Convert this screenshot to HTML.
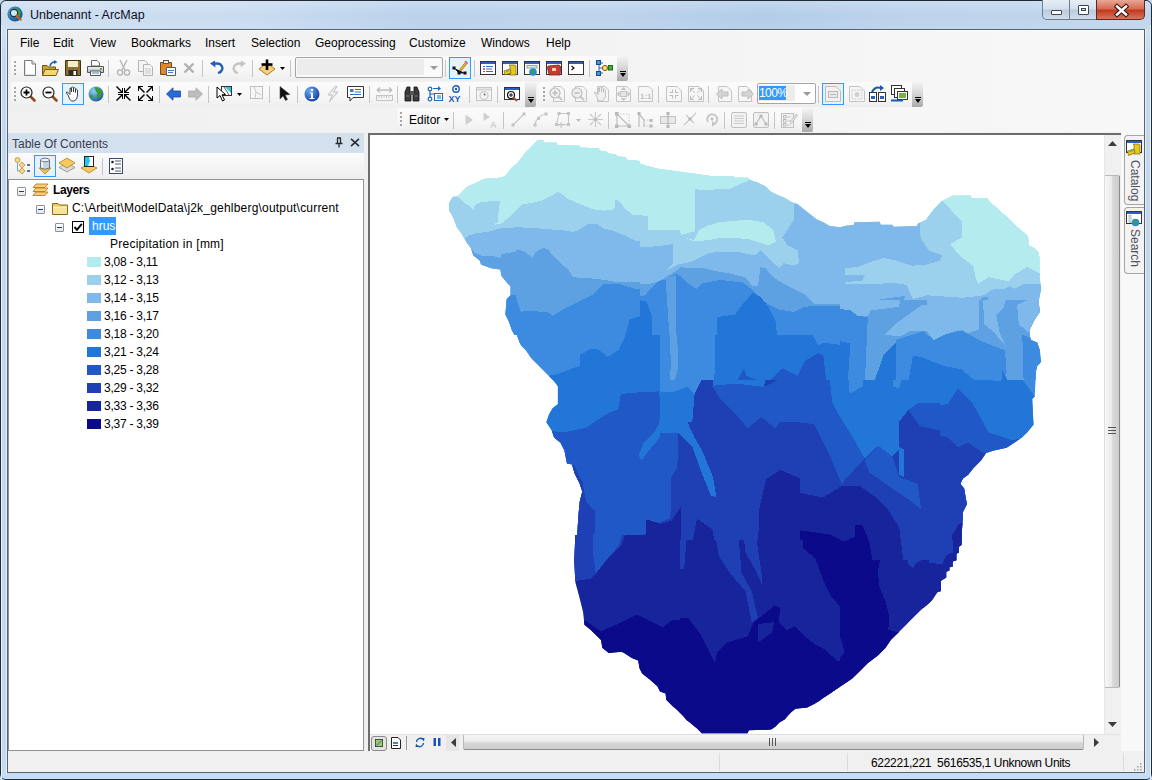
<!DOCTYPE html>
<html><head><meta charset="utf-8">
<style>
*{margin:0;padding:0;box-sizing:border-box}
html,body{width:1152px;height:780px;overflow:hidden;background:#c3d8ee}
body{position:relative;font-family:"Liberation Sans",sans-serif;font-size:12px;color:#000}
.a{position:absolute}
svg.a{overflow:visible}
.menu{top:36px;font-size:12px;color:#000;line-height:14px}
.tb{background:linear-gradient(180deg,#fbfbfb 0%,#f6f6f6 60%,#eeeeee 100%);border-radius:3px 0 0 3px}
.sep{width:1px;background:#c5c5c5;height:17px}
.grip{width:2px;height:14px;background:repeating-linear-gradient(180deg,#a6a6a6 0 2px,transparent 2px 4px)}
.chev{width:11px;background:linear-gradient(180deg,#f4f4f4 0%,#d8d8d8 45%,#a9a9a9 100%);border-radius:0 0 2px 0}
.chev:after{content:"";position:absolute;left:3px;bottom:4px;width:0;height:0;border-left:3px solid transparent;border-right:3px solid transparent;border-top:4px solid #000}
.chev:before{content:"";position:absolute;left:3px;bottom:9px;width:6px;height:1.5px;background:#000}
.hl{border:1px solid #3399ff;background:#e5f1fb}
.leg{left:87px;width:14px;height:10px}
.lt{left:104px;font-size:12px;line-height:14px;letter-spacing:-0.25px}
</style></head><body>
<!-- window frame -->
<div class="a" style="left:0;top:0;width:1152px;height:780px;border:1px solid #1f2a36;border-radius:6px;background:linear-gradient(180deg,#c7dbf0 0px,#d9e7f5 14px,#cfe0f2 29px,#c3d8ee 60px,#c3d8ee 100%)"></div>
<div class="a" style="left:1px;top:1px;width:1150px;height:28px;border-radius:6px 6px 0 0;background:linear-gradient(90deg,#cadcf0 0px,#c6daef 250px,#b6cfea 420px,#b9d1eb 600px,#aecae7 760px,#b8d0ea 900px,#bdd4ec 1150px)"></div>
<div class="a" style="left:1px;top:1px;width:1150px;height:28px;border-radius:6px 6px 0 0;background:linear-gradient(180deg,rgba(255,255,255,0.25) 0px,rgba(255,255,255,0.05) 14px,rgba(255,255,255,0.12) 28px)"></div>
<div class="a" style="left:1px;top:745px;width:1150px;height:34px;border-radius:0 0 5px 5px;background:linear-gradient(180deg,#c3d8ee,#c6ddf5)"></div>
<!-- title icon -->
<svg class="a" style="left:7px;top:6px" width="17" height="17" viewBox="0 0 17 17">
 <defs><radialGradient id="gl" cx="0.35" cy="0.35" r="0.7"><stop offset="0" stop-color="#5fb3e8"/><stop offset="1" stop-color="#0d4f8e"/></radialGradient></defs>
 <circle cx="8" cy="8" r="7.6" fill="url(#gl)"/>
 <path d="M8 1.5 Q12 2.5 14 6 Q12 8 13.5 11 Q11 9 9 10 Q10 6 8 1.5Z" fill="#3f9a3a"/>
 <circle cx="7" cy="7" r="3.6" fill="#c7ecf8" stroke="#2b2b2b" stroke-width="1.1"/>
 <path d="M9.6 9.6 L13.6 13.6" stroke="#b5652a" stroke-width="2.2" stroke-linecap="round"/>
</svg>
<div class="a" style="left:30px;top:8px;font-size:12.5px;color:#10101e;line-height:15px">Unbenannt - ArcMap</div>
<!-- caption buttons -->
<div class="a" style="left:1042px;top:0px;width:28px;height:20px;border:1px solid #6d7d90;border-top:none;border-radius:0 0 0 5px;background:linear-gradient(180deg,#e6eef7 0,#d3dfec 48%,#bccbdc 52%,#cfdceb 100%)"></div>
<div class="a" style="left:1069px;top:0px;width:28px;height:20px;border:1px solid #6d7d90;border-top:none;background:linear-gradient(180deg,#e6eef7 0,#d3dfec 48%,#bccbdc 52%,#cfdceb 100%)"></div>
<div class="a" style="left:1096px;top:0px;width:49px;height:20px;border:1px solid #5a2a26;border-top:none;border-radius:0 0 5px 0;background:linear-gradient(180deg,#e9a795 0,#d66c53 45%,#c23a1e 55%,#d9765d 100%)"></div>
<div class="a" style="left:1051px;top:10px;width:11px;height:5px;background:#fff;border:1px solid #3a4656;border-radius:1px"></div>
<div class="a" style="left:1078px;top:5px;width:11px;height:10px;background:#fff;border:1px solid #3a4656;border-radius:1px"></div>
<div class="a" style="left:1081px;top:8px;width:5px;height:3px;border:1px solid #3a4656;background:#cfdbe8"></div>
<svg class="a" style="left:1115px;top:5px" width="13" height="11" viewBox="0 0 13 11"><path d="M2 1.5 L11 9.5 M11 1.5 L2 9.5" stroke="#3b1a16" stroke-width="4.6" stroke-linecap="square"/><path d="M2 1.5 L11 9.5 M11 1.5 L2 9.5" stroke="#fff" stroke-width="2.4" stroke-linecap="square"/></svg>

<!-- client -->
<div class="a" style="left:1px;top:25px;width:1px;height:754px;background:#eaf3fc"></div><div class="a" style="left:6px;top:29px;width:1px;height:745px;background:#e6f0fb"></div><div class="a" style="left:1150px;top:25px;width:1px;height:754px;background:#eaf3fc"></div><div class="a" style="left:1145px;top:29px;width:1px;height:745px;background:#e6f0fb"></div><div class="a" style="left:7px;top:29px;width:1138px;height:744px;border:1px solid #56626e;background:#f0f0f0"></div>
<div class="a" style="left:8px;top:30px;width:1136px;height:102px;background:linear-gradient(90deg,#f0f0f0 0%,#f3f3f3 50%,#f8f8f8 100%)"></div>
<div class="a" style="left:8px;top:30px;width:1136px;height:1px;background:#fbfbfb"></div>
<!-- menu -->
<div class="a menu" style="left:20px">File</div>
<div class="a menu" style="left:53px">Edit</div>
<div class="a menu" style="left:90px">View</div>
<div class="a menu" style="left:131px">Bookmarks</div>
<div class="a menu" style="left:205px">Insert</div>
<div class="a menu" style="left:251px">Selection</div>
<div class="a menu" style="left:315px">Geoprocessing</div>
<div class="a menu" style="left:409px">Customize</div>
<div class="a menu" style="left:481px">Windows</div>
<div class="a menu" style="left:546px">Help</div>

<!-- toolbars backgrounds -->
<div class="a tb" style="left:11px;top:56px;width:606px;height:25px"></div>
<div class="a chev" style="left:617px;top:56px;height:25px"></div>
<div class="a tb" style="left:11px;top:82px;width:514px;height:25px"></div>
<div class="a chev" style="left:525px;top:82px;height:25px"></div>
<div class="a tb" style="left:538px;top:82px;width:374px;height:25px"></div>
<div class="a chev" style="left:912px;top:82px;height:25px"></div>
<div class="a tb" style="left:397px;top:108px;width:405px;height:24px"></div>
<div class="a chev" style="left:802px;top:108px;height:24px"></div>
<div class="a grip" style="left:14px;top:61px"></div>
<div class="a grip" style="left:14px;top:87px"></div>
<div class="a grip" style="left:543px;top:87px"></div>
<div class="a grip" style="left:400px;top:112px"></div>

<!-- TOC -->
<div class="a" style="left:8px;top:133px;width:356px;height:20px;background:#d3e0ee"></div>
<div class="a" style="left:12px;top:137px;font-size:12px;line-height:14px;color:#3c3c4c">Table Of Contents</div>
<svg class="a" style="left:334px;top:137px" width="10" height="11" viewBox="0 0 10 11"><path d="M3 1 H7 M3.5 1 V6 M6.5 1 V6 M1.5 6.5 H8.5 M5 6.5 V10.5" stroke="#2a2a2a" stroke-width="1.3" fill="none"/></svg>
<svg class="a" style="left:350px;top:138px" width="10" height="9" viewBox="0 0 10 9"><path d="M1 0.8 L9 8.2 M9 0.8 L1 8.2" stroke="#2b2f36" stroke-width="1.6"/></svg>
<div class="a" style="left:9px;top:153px;width:355px;height:26px;background:linear-gradient(180deg,#fbfbfb,#eeeeee);border-radius:3px 0 0 0"></div>
<div class="a" style="left:8px;top:179px;width:356px;height:572px;border:1px solid #8e939a;background:#fff"></div>

<!-- map frame -->
<div class="a" style="left:368px;top:133px;width:753px;height:618px;border-left:2px solid #6d6d6d;border-top:2px solid #6d6d6d;background:#fff"></div>
<!-- vertical scrollbar -->
<div class="a" style="left:1104px;top:135px;width:17px;height:599px;background:#f0f0f0;border-left:1px solid #e6e6e6"></div>
<svg class="a" style="left:1108px;top:141px" width="9" height="5" viewBox="0 0 9 5"><path d="M0 5 L4.5 0 L9 5Z" fill="#3c3c3c"/></svg>
<div class="a" style="left:1104px;top:175px;width:16px;height:513px;border:1px solid #b8b8b8;border-left-color:#dedede;border-right-color:#8a8a8a;border-radius:2px;background:linear-gradient(90deg,#f6f6f6 0%,#ececec 45%,#d8d8d8 55%,#cdcdcd 100%)"></div>
<svg class="a" style="left:1108px;top:427px" width="8" height="7" viewBox="0 0 8 7"><path d="M0 0.5H8M0 3.5H8M0 6.5H8" stroke="#555" stroke-width="1"/></svg>
<svg class="a" style="left:1108px;top:722px" width="9" height="5" viewBox="0 0 9 5"><path d="M0 0 L4.5 5 L9 0Z" fill="#3c3c3c"/></svg>
<!-- horizontal scrollbar & bottom tools -->
<div class="a" style="left:370px;top:734px;width:751px;height:17px;background:#f0f0f0;border-top:1px solid #e3e3e3"></div>
<div class="a" style="left:446px;top:735px;width:13px;height:16px;background:#e6e6e6"></div>
<svg class="a" style="left:451px;top:738px" width="5" height="9" viewBox="0 0 5 9"><path d="M5 0 L0 4.5 L5 9Z" fill="#3c3c3c"/></svg>
<div class="a" style="left:463px;top:734px;width:621px;height:16px;border:1px solid #b8b8b8;border-top-color:#dedede;border-bottom-color:#8a8a8a;border-radius:2px;background:linear-gradient(180deg,#f6f6f6 0%,#ececec 45%,#d8d8d8 55%,#cdcdcd 100%)"></div>
<svg class="a" style="left:769px;top:738px" width="7" height="8" viewBox="0 0 7 8"><path d="M0.5 0V8M3.5 0V8M6.5 0V8" stroke="#555" stroke-width="1"/></svg>
<svg class="a" style="left:1094px;top:738px" width="5" height="9" viewBox="0 0 5 9"><path d="M0 0 L5 4.5 L0 9Z" fill="#3c3c3c"/></svg>
<!-- right tab area -->
<div class="a" style="left:1121px;top:132px;width:23px;height:619px;background:#f8f8f8"></div>
<div class="a" style="left:1124px;top:135px;width:20px;height:70px;border:1px solid #a5a5a5;border-right:none;border-radius:4px 0 0 4px;background:#f3f3f3"></div>
<div class="a" style="left:1124px;top:207px;width:20px;height:67px;border:1px solid #a5a5a5;border-right:none;border-radius:4px 0 0 4px;background:#f3f3f3"></div>
<div class="a" style="left:1128px;top:160px;width:14px;height:42px;"><div style="transform:rotate(90deg);transform-origin:0 0;position:absolute;left:13px;top:0;font-size:12px;line-height:13px;color:#505060;white-space:nowrap">Catalog</div></div>
<div class="a" style="left:1128px;top:229px;width:14px;height:46px;"><div style="transform:rotate(90deg);transform-origin:0 0;position:absolute;left:13px;top:0;font-size:12px;line-height:13px;color:#505060;white-space:nowrap">Search</div></div>
<!-- status bar -->
<div class="a" style="left:8px;top:751px;width:1136px;height:21px;background:#f0f0f0"></div>
<div class="a" style="left:719px;top:753px;width:1px;height:18px;background:#dcdcdc"></div>
<div class="a" style="left:847px;top:753px;width:1px;height:18px;background:#dcdcdc"></div>
<div class="a" style="left:1123px;top:753px;width:1px;height:18px;background:#dcdcdc"></div>
<div class="a" style="left:871px;top:756px;font-size:12px;line-height:14px;color:#000;white-space:pre;letter-spacing:-0.33px">622221,221  5616535,1 Unknown Units</div>
<svg class="a" style="left:1133px;top:762px" width="9" height="9" viewBox="0 0 9 9"><g fill="#a0a0a0"><rect x="7" y="1" width="1.5" height="1.5"/><rect x="4" y="4" width="1.5" height="1.5"/><rect x="7" y="4" width="1.5" height="1.5"/><rect x="1" y="7" width="1.5" height="1.5"/><rect x="4" y="7" width="1.5" height="1.5"/><rect x="7" y="7" width="1.5" height="1.5"/></g></svg>
<!-- TOC tree -->
<div class="a" style="left:17px;top:187px;width:9px;height:9px;border:1px solid #919191;border-radius:1px;background:linear-gradient(180deg,#fff,#e6e6e6)"><div class="a" style="left:1px;top:3px;width:5px;height:1px;background:#1f3a8a"></div></div>
<svg class="a" style="left:32px;top:183px" width="17" height="14" viewBox="0 0 17 14">
 <g stroke="#c07a20" stroke-width="0.9" fill="#f3cf7a"><path d="M4 1 H16 L13 4.5 H1Z"/><path d="M4 5 H16 L13 8.5 H1Z"/><path d="M4 9 H16 L13 12.5 H1Z"/></g>
</svg>
<div class="a" style="left:53px;top:183px;font-size:12px;line-height:14px;font-weight:bold;letter-spacing:-0.4px">Layers</div>
<div class="a" style="left:36px;top:205px;width:9px;height:9px;border:1px solid #919191;border-radius:1px;background:linear-gradient(180deg,#fff,#e6e6e6)"><div class="a" style="left:1px;top:3px;width:5px;height:1px;background:#1f3a8a"></div></div>
<svg class="a" style="left:52px;top:202px" width="16" height="13" viewBox="0 0 16 13">
 <path d="M0.5 1.5 H6 L7.5 3 H15.5 V12.5 H0.5Z" fill="#e8c85a" stroke="#8a6a1a" stroke-width="1"/><path d="M1 5 H15 V12 H1Z" fill="#f6e49a"/><path d="M1 5 H15" stroke="#fff8d0"/>
</svg>
<div class="a" style="left:72px;top:201px;font-size:12px;line-height:14px;white-space:nowrap;letter-spacing:0.2px">C:\Arbeit\ModelData\j2k_gehlberg\output\current</div>
<div class="a" style="left:55px;top:223px;width:9px;height:9px;border:1px solid #919191;border-radius:1px;background:linear-gradient(180deg,#fff,#e6e6e6)"><div class="a" style="left:1px;top:3px;width:5px;height:1px;background:#1f3a8a"></div></div>
<div class="a" style="left:72px;top:221px;width:12px;height:12px;border:1px solid #000;background:#fff"></div>
<svg class="a" style="left:73px;top:222px" width="10" height="10" viewBox="0 0 10 10"><path d="M1.5 5 L4 7.8 L8.8 1.8" stroke="#000" stroke-width="1.9" fill="none"/></svg>
<div class="a" style="left:89px;top:217px;width:27px;height:18px;background:#3399ff"></div>
<div class="a" style="left:92px;top:219px;font-size:12px;line-height:14px;color:#fff">hrus</div>
<div class="a" style="left:110px;top:237px;font-size:12px;line-height:14px;letter-spacing:0.25px">Precipitation in [mm]</div>
<div class="a leg" style="top:257px;background:#b3ebee"></div><div class="a lt" style="top:255px">3,08 - 3,11</div>
<div class="a leg" style="top:275px;background:#9bd1ed"></div><div class="a lt" style="top:273px">3,12 - 3,13</div>
<div class="a leg" style="top:293px;background:#7fb8ea"></div><div class="a lt" style="top:291px">3,14 - 3,15</div>
<div class="a leg" style="top:311px;background:#5ea1e3"></div><div class="a lt" style="top:309px">3,16 - 3,17</div>
<div class="a leg" style="top:329px;background:#3c8be0"></div><div class="a lt" style="top:327px">3,18 - 3,20</div>
<div class="a leg" style="top:347px;background:#2176d8"></div><div class="a lt" style="top:345px">3,21 - 3,24</div>
<div class="a leg" style="top:365px;background:#2158c8"></div><div class="a lt" style="top:363px">3,25 - 3,28</div>
<div class="a leg" style="top:383px;background:#1f40b4"></div><div class="a lt" style="top:381px">3,29 - 3,32</div>
<div class="a leg" style="top:401px;background:#18249c"></div><div class="a lt" style="top:399px">3,33 - 3,36</div>
<div class="a leg" style="top:419px;background:#0a0a8a"></div><div class="a lt" style="top:417px">3,37 - 3,39</div>
<!-- ROW 1 icons -->
<svg class="a" style="left:22px;top:60px" width="16" height="16" viewBox="0 0 16 16"><path d="M2.5 0.5 H10 L13.5 4 V15.5 H2.5Z" fill="#fff" stroke="#7a7a7a"/><path d="M10 0.5 V4 H13.5" fill="#e8e8e8" stroke="#7a7a7a"/><path d="M3.5 2 V14.5 H12.5" stroke="#dbe6f3" fill="none"/></svg>
<svg class="a" style="left:42px;top:60px" width="17" height="16" viewBox="0 0 17 16"><path d="M0.5 5.5 H5 L6.5 7 H13.5 V15.5 H0.5Z" fill="#c9a23a" stroke="#6e5410"/><path d="M0.5 15.5 L3 9.5 H16.5 L14 15.5Z" fill="#f2d66e" stroke="#7a5e14"/><path d="M8 6 Q9 2 13 2" stroke="#1c5fb0" stroke-width="1.6" fill="none"/><path d="M12 0 L15.5 2 L12 4Z" fill="#1c5fb0"/></svg>
<svg class="a" style="left:65px;top:60px" width="16" height="16" viewBox="0 0 16 16"><path d="M0.5 0.5 H15.5 V15.5 H0.5Z" fill="#8c7232" stroke="#3e3210"/><rect x="3" y="1" width="10" height="6" fill="#f5ecc8"/><rect x="3.5" y="10" width="9" height="5.5" fill="#2e2e2e"/><rect x="8.5" y="11" width="2.5" height="4" fill="#fff"/></svg>
<svg class="a" style="left:87px;top:60px" width="17" height="16" viewBox="0 0 17 16"><path d="M4.5 0.5 H10 L12.5 3 V6 H4.5Z" fill="#fff" stroke="#666"/><path d="M0.5 6.5 H16.5 V12.5 H0.5Z" fill="#c8c8c8" stroke="#555"/><path d="M1 7 H16 V9 H1Z" fill="#e8e8e8"/><path d="M3.5 11 H13.5 V15.5 H3.5Z" fill="#fff" stroke="#555"/><path d="M5 13 H12" stroke="#3a7ed0"/><rect x="13" y="8" width="2" height="1.5" fill="#30a030"/></svg>
<div class="a sep" style="left:108px;top:60px"></div>
<svg class="a" style="left:116px;top:60px" width="15" height="16" viewBox="0 0 15 16"><path d="M4 0 L9 10 M11 0 L6 10" stroke="#b8b8b8" stroke-width="1.5"/><circle cx="4" cy="12.5" r="2.6" fill="none" stroke="#b0b0b0" stroke-width="1.3"/><circle cx="11" cy="12.5" r="2.6" fill="none" stroke="#b0b0b0" stroke-width="1.3"/></svg>
<svg class="a" style="left:138px;top:60px" width="16" height="16" viewBox="0 0 16 16"><path d="M0.5 0.5 H7 L9.5 3 V11.5 H0.5Z" fill="#f4f4f4" stroke="#b4b4b4"/><path d="M5.5 4.5 H12 L14.5 7 V15.5 H5.5Z" fill="#f4f4f4" stroke="#b4b4b4"/><path d="M7 9H13M7 11H13M7 13H13" stroke="#c8c8c8"/></svg>
<svg class="a" style="left:160px;top:60px" width="16" height="16" viewBox="0 0 16 16"><path d="M0.5 2.5 H11.5 V14.5 H0.5Z" fill="#d98a2a" stroke="#7a4a10"/><rect x="3.5" y="0.5" width="5" height="3" fill="#f0f0f0" stroke="#555"/><path d="M6.5 7.5 H15.5 V15.5 H6.5Z" fill="#fff" stroke="#5a5a5a"/><path d="M8 10.5H14M8 12.5H13" stroke="#3a7ed0"/></svg>
<svg class="a" style="left:183px;top:62px" width="12" height="12" viewBox="0 0 12 12"><path d="M1.5 1.5 L10.5 10.5 M10.5 1.5 L1.5 10.5" stroke="#b0b0b0" stroke-width="2.4"/></svg>
<div class="a sep" style="left:202px;top:60px"></div>
<svg class="a" style="left:209px;top:60px" width="16" height="16" viewBox="0 0 16 16"><path d="M4 4 Q12 2 13.5 8 Q13 12 9 13" stroke="#1f5fb8" stroke-width="2.3" fill="none"/><path d="M1 3.5 L6 0.5 L6.5 7.5Z" fill="#1f5fb8"/></svg>
<svg class="a" style="left:231px;top:60px" width="16" height="16" viewBox="0 0 16 16"><path d="M12 4 Q4 2 2.5 8 Q3 12 7 13" stroke="#c4c4c4" stroke-width="2.3" fill="none"/><path d="M15 3.5 L10 0.5 L9.5 7.5Z" fill="#c4c4c4"/></svg>
<div class="a sep" style="left:252px;top:60px"></div>
<svg class="a" style="left:258px;top:59px" width="18" height="18" viewBox="0 0 18 18"><path d="M9 4 L17 10 L9 16 L1 10Z" fill="#f5d27a" stroke="#b07a20"/><path d="M9 0.5 V11 M3.5 5.5 H14.5" stroke="#000" stroke-width="2.6"/></svg>
<svg class="a" style="left:280px;top:67px" width="5" height="3" viewBox="0 0 5 3"><path d="M0 0H5L2.5 3Z" fill="#000"/></svg>
<div class="a sep" style="left:290px;top:60px"></div>
<div class="a" style="left:295px;top:57px;width:148px;height:21px;border:1px solid #a5a5a5;border-radius:2px;background:#fafafa"></div>
<div class="a" style="left:297px;top:59px;width:127px;height:16px;background:#ececec"></div>
<svg class="a" style="left:430px;top:66px" width="8" height="4" viewBox="0 0 8 4"><path d="M0 0H8L4 4Z" fill="#9a9a9a"/></svg>
<div class="a sep" style="left:445px;top:60px"></div>
<div class="a hl" style="left:449px;top:57px;width:22px;height:22px"></div>
<svg class="a" style="left:452px;top:60px" width="16" height="16" viewBox="0 0 16 16"><path d="M2 8 L7 13 H13" stroke="#333" stroke-width="1"/><g fill="#111"><rect x="0.5" y="6.5" width="3" height="3"/><rect x="5.5" y="11.5" width="3" height="3"/><rect x="11.5" y="11.5" width="3" height="3"/></g><path d="M8 9 L14 1.5 L15.5 3 L9.5 10.5 L7.5 11Z" fill="#f0b030" stroke="#8a5a10" stroke-width="0.6"/><path d="M13 1 L15.5 3.5" stroke="#e06060" stroke-width="1.5"/></svg>
<div class="a sep" style="left:474px;top:60px"></div>
<!-- window icons -->
<svg class="a" style="left:480px;top:60px" width="16" height="16" viewBox="0 0 16 16"><rect x="0.5" y="1.5" width="15" height="13" fill="#fff" stroke="#333"/><rect x="1" y="2" width="14" height="2" fill="#2a5fc0"/><path d="M3 6.5H5M6 6.5H13M3 9H5M6 9H12M3 11.5H5M6 11.5H13" stroke="#2a6fd0"/><path d="M3 9H5M3 11.5H5" stroke="#d03030"/><path d="M3 11.5H5" stroke="#30a030"/></svg>
<svg class="a" style="left:502px;top:60px" width="16" height="16" viewBox="0 0 16 16"><rect x="0.5" y="1.5" width="15" height="13" fill="#fff" stroke="#333"/><rect x="1" y="2" width="14" height="2" fill="#2a5fc0"/><path d="M7 5 L13 5 L14 6 V15 H8 V6Z" fill="#e6c820" stroke="#7a6a10" stroke-width="0.7"/><path d="M2 11 L8 9 L9 13 L3 15Z" fill="#e6c820" stroke="#7a6a10" stroke-width="0.7"/><path d="M4 11.5 L7 10.5" stroke="#3a9ad0"/></svg>
<svg class="a" style="left:524px;top:60px" width="16" height="16" viewBox="0 0 16 16"><rect x="0.5" y="1.5" width="15" height="13" fill="#fff" stroke="#333"/><rect x="1" y="2" width="14" height="2" fill="#2a5fc0"/><rect x="3" y="5.5" width="10" height="2.5" fill="#dde6f0" stroke="#8aa"/><circle cx="9" cy="12" r="3.8" fill="#2a8ad0"/><path d="M7 10 Q9 9 10.5 11 Q9 13 11 14.5 Q8 14 7 12Z" fill="#40a040"/></svg>
<svg class="a" style="left:546px;top:60px" width="16" height="16" viewBox="0 0 16 16"><rect x="0.5" y="1.5" width="15" height="13" fill="#fff" stroke="#333"/><rect x="1" y="2" width="14" height="2" fill="#2a5fc0"/><path d="M2 6 L13 5 L15 7 L14 15 L3 15 L1.5 8Z" fill="#c83a30" stroke="#6a1a10" stroke-width="0.7"/><rect x="6" y="8" width="4" height="3" fill="#f0d0c0"/></svg>
<svg class="a" style="left:568px;top:60px" width="16" height="16" viewBox="0 0 16 16"><rect x="0.5" y="1.5" width="15" height="13" fill="#fff" stroke="#333"/><rect x="1" y="2" width="14" height="2" fill="#2a5fc0"/><path d="M3.5 6 L6 8 L3.5 10" stroke="#111" stroke-width="1.2" fill="none"/></svg>
<div class="a sep" style="left:589px;top:60px"></div>
<svg class="a" style="left:596px;top:60px" width="17" height="16" viewBox="0 0 17 16"><path d="M3 3 V13 M3 8 H12 M3 3H7 M3 13 H7" stroke="#2a6ac0" stroke-width="1" fill="none"/><rect x="0.5" y="0.5" width="4" height="4" fill="#3a9ae0" stroke="#1a4a90"/><rect x="0.5" y="11.5" width="4" height="4" fill="#3a9ae0" stroke="#1a4a90"/><circle cx="9" cy="8" r="2.6" fill="#f5e070" stroke="#8a5a10"/><rect x="12.5" y="5.5" width="4" height="4.5" fill="#40b040" stroke="#1a6a1a"/></svg>

<!-- ROW 2 icons -->
<svg class="a" style="left:20px;top:86px" width="16" height="16" viewBox="0 0 16 16"><path d="M9.5 9.5 L14.5 14.5" stroke="#8a4a20" stroke-width="2.6" stroke-linecap="round"/><circle cx="6.5" cy="6.5" r="5.5" fill="#fff" stroke="#222" stroke-width="1.2"/><path d="M6.5 3.5V9.5M3.5 6.5H9.5" stroke="#000" stroke-width="1.8"/></svg>
<svg class="a" style="left:42px;top:86px" width="16" height="16" viewBox="0 0 16 16"><path d="M9.5 9.5 L14.5 14.5" stroke="#8a4a20" stroke-width="2.6" stroke-linecap="round"/><circle cx="6.5" cy="6.5" r="5.5" fill="#fff" stroke="#222" stroke-width="1.2"/><path d="M3.5 6.5H9.5" stroke="#000" stroke-width="1.8"/></svg>
<div class="a hl" style="left:62px;top:83px;width:22px;height:22px"></div>
<svg class="a" style="left:65px;top:86px" width="16" height="16" viewBox="0 0 16 16"><path d="M3 9 L1.5 7 Q1 5.5 2.5 6 L5 8.5 V3 Q5 1.5 6 2 L6.5 6 V1.5 Q7.5 0.5 8.5 1.5 V6 V2 Q9.5 1 10.5 2.5 V6.5 V3.5 Q11.5 2.5 12.5 4 V10 Q12 14 9 15 H6.5 Q4.5 14 3 9Z" fill="#fff" stroke="#333" stroke-width="0.9"/></svg>
<svg class="a" style="left:88px;top:86px" width="16" height="16" viewBox="0 0 16 16"><defs><radialGradient id="g2" cx="0.35" cy="0.3" r="0.75"><stop offset="0" stop-color="#8fd0f5"/><stop offset="1" stop-color="#1a5a9a"/></radialGradient></defs><circle cx="8" cy="8" r="7.5" fill="url(#g2)"/><path d="M7 1 Q12 2 14.5 6 Q12 7 13 11 Q10 10 9 13 Q8 9 10 7 Q7 6 7 1Z" fill="#3a9a2a"/><path d="M2 9 Q4 8 5 10 Q4 12 5 14 Q2 12 2 9Z" fill="#3a9a2a"/></svg>
<div class="a sep" style="left:108px;top:86px"></div>
<svg class="a" style="left:116px;top:86px" width="15" height="15" viewBox="0 0 15 15"><g fill="#000"><path d="M0 1 L1 0 L6 5 V2 H7 V7 H2 V6 H5Z"/><path d="M15 1 L14 0 L9 5 V2 H8 V7 H13 V6 H10Z"/><path d="M0 14 L1 15 L6 10 V13 H7 V8 H2 V9 H5Z"/><path d="M15 14 L14 15 L9 10 V13 H8 V8 H13 V9 H10Z"/></g></svg>
<svg class="a" style="left:138px;top:86px" width="15" height="15" viewBox="0 0 15 15"><g fill="#000"><path d="M0 0 H5 V1 H2 L7 6 L6 7 L1 2 V5 H0Z"/><path d="M15 0 H10 V1 H13 L8 6 L9 7 L14 2 V5 H15Z"/><path d="M0 15 H5 V14 H2 L7 9 L6 8 L1 13 V10 H0Z"/><path d="M15 15 H10 V14 H13 L8 9 L9 8 L14 13 V10 H15Z"/></g></svg>
<div class="a sep" style="left:159px;top:86px"></div>
<svg class="a" style="left:166px;top:87px" width="15" height="14" viewBox="0 0 15 14"><path d="M0.5 7 L7 0.8 V4 H14.5 V10 H7 V13.2Z" fill="#2a6ad8" stroke="#1a4aa0" stroke-width="0.8"/></svg>
<svg class="a" style="left:188px;top:87px" width="15" height="14" viewBox="0 0 15 14"><path d="M14.5 7 L8 0.8 V4 H0.5 V10 H8 V13.2Z" fill="#bdbdbd" stroke="#a8a8a8" stroke-width="0.8"/></svg>
<div class="a sep" style="left:208px;top:86px"></div>
<svg class="a" style="left:216px;top:85px" width="16" height="17" viewBox="0 0 16 17"><rect x="5.5" y="1.5" width="10" height="9" fill="#fff" stroke="#333"/><path d="M9 2 L15 2 L15 8Z" fill="#30c0e8"/><path d="M8 2 L13 10" stroke="#333" stroke-width="0.8"/><path d="M1 2 L1 13 L4 10.5 L6.5 16 L8.5 15 L6 9.8 L9.5 9.5Z" fill="#fff" stroke="#000" stroke-width="1"/></svg>
<svg class="a" style="left:237px;top:93px" width="5" height="3" viewBox="0 0 5 3"><path d="M0 0H5L2.5 3Z" fill="#000"/></svg>
<svg class="a" style="left:250px;top:86px" width="13" height="13" viewBox="0 0 13 13"><rect x="0.5" y="0.5" width="12" height="12" fill="#f6f6f6" stroke="#c0c0c0"/><path d="M4 1 L6 6 L11 9 M6 6 L5 12" stroke="#c8c8c8" fill="none"/></svg>
<div class="a sep" style="left:269px;top:86px"></div>
<svg class="a" style="left:279px;top:86px" width="12" height="15" viewBox="0 0 12 15"><path d="M1 0.5 V13 L4 10 L6.5 14.5 L8.5 13.5 L6.2 9 L11 8.5Z" fill="#111" stroke="#444" stroke-width="0.6"/></svg>
<div class="a sep" style="left:297px;top:86px"></div>
<svg class="a" style="left:304px;top:86px" width="16" height="16" viewBox="0 0 16 16"><defs><radialGradient id="g3" cx="0.35" cy="0.3" r="0.8"><stop offset="0" stop-color="#6aaaf0"/><stop offset="1" stop-color="#0a3a9a"/></radialGradient></defs><circle cx="8" cy="8" r="7.5" fill="url(#g3)"/><circle cx="8" cy="4" r="1.3" fill="#fff"/><path d="M6 6.5H9V12H10.5V13H5.5V12H7V7.5H6Z" fill="#fff"/></svg>
<svg class="a" style="left:326px;top:86px" width="14" height="16" viewBox="0 0 14 16"><path d="M9 0.5 L2 9 H6.5 L3.5 15.5 L12 6 H7.5 L11 0.5Z" fill="#efefef" stroke="#c0c0c0"/></svg>
<svg class="a" style="left:347px;top:86px" width="17" height="16" viewBox="0 0 17 16"><path d="M0.5 0.5 H16.5 V11.5 H6 L3 15 V11.5 H0.5Z" fill="#fff" stroke="#333"/><rect x="3" y="3" width="3.5" height="3" fill="#2a80e0"/><path d="M8 3.5H14M8 6H14M3 8.5H14" stroke="#2a70c8" stroke-width="1.2"/></svg>
<div class="a sep" style="left:369px;top:86px"></div>
<svg class="a" style="left:376px;top:86px" width="17" height="16" viewBox="0 0 17 16"><path d="M1 4 H16 M1 4 L4 1.5 M1 4 L4 6.5 M16 4 L13 1.5 M16 4 L13 6.5" stroke="#c0c0c0" stroke-width="1.4" fill="none"/><rect x="0.5" y="9.5" width="16" height="5" fill="#f4f4f4" stroke="#c4c4c4"/><path d="M3 10V12M5.5 10V12M8 10V12M10.5 10V12M13 10V12" stroke="#c4c4c4"/></svg>
<div class="a sep" style="left:397px;top:86px"></div>
<svg class="a" style="left:404px;top:86px" width="16" height="16" viewBox="0 0 16 16"><path d="M1 6 L3 1 H6 V6 L7 9 V15 H1Z" fill="#3a3a3a" stroke="#111" stroke-width="0.8"/><path d="M15 6 L13 1 H10 V6 L9 9 V15 H15Z" fill="#3a3a3a" stroke="#111" stroke-width="0.8"/><rect x="6" y="5" width="4" height="4" fill="#555"/><path d="M2 10 H5.5 M10.5 10 H14" stroke="#777"/></svg>
<svg class="a" style="left:427px;top:85px" width="16" height="17" viewBox="0 0 16 17"><path d="M3 5 V13 M3 9 H8 M6 3.5 H11" stroke="#1a6ac0" stroke-width="1.2" fill="none"/><path d="M11 1 L14 3.5 L11 6Z" fill="#1a6ac0"/><circle cx="3" cy="4" r="1.8" fill="#fff" stroke="#1a6ac0" stroke-width="1.2"/><circle cx="3" cy="14" r="1.8" fill="#fff" stroke="#1a6ac0" stroke-width="1.2"/><rect x="7.5" y="8.5" width="8" height="7" fill="#fff" stroke="#1a6ac0"/><path d="M10 11H14M10 13H14" stroke="#1a6ac0"/></svg>
<svg class="a" style="left:448px;top:85px" width="16" height="17" viewBox="0 0 16 17"><circle cx="8" cy="4" r="3.2" fill="none" stroke="#1a5ab0" stroke-width="1.4"/><circle cx="8" cy="4" r="1.2" fill="#1a5ab0"/><text x="0.5" y="16.5" font-family="Liberation Sans" font-weight="bold" font-size="9" fill="#1a5ab0">XY</text></svg>
<div class="a sep" style="left:469px;top:86px"></div>
<svg class="a" style="left:476px;top:86px" width="16" height="16" viewBox="0 0 16 16"><rect x="0.5" y="1.5" width="15" height="13" fill="#f4f4f4" stroke="#c4c4c4"/><path d="M1 3.5H15" stroke="#d4d4d4" stroke-width="2"/><circle cx="8" cy="9.5" r="4" fill="none" stroke="#c8c8c8" stroke-width="1.2"/><path d="M8 7V9.5H10" stroke="#c8c8c8"/></svg>
<div class="a sep" style="left:497px;top:86px"></div>
<svg class="a" style="left:504px;top:86px" width="17" height="17" viewBox="0 0 17 17"><rect x="0.5" y="1.5" width="15" height="12" fill="#fff" stroke="#333"/><rect x="1" y="2" width="14" height="2" fill="#2a5fc0"/><circle cx="7" cy="9" r="3.5" fill="#fff" stroke="#111" stroke-width="1.2"/><path d="M7 7V11M5 9H9" stroke="#111"/><path d="M9.5 11.5 L13 15" stroke="#a0522d" stroke-width="2"/></svg>
<!-- layout toolbar -->
<svg class="a" style="left:549px;top:86px" width="17" height="16" viewBox="0 0 17 16"><path d="M4.5 0.5 H12 L15.5 4 V15.5 H4.5Z" fill="#f6f6f6" stroke="#c4c4c4"/><circle cx="6" cy="7" r="5" fill="#efefef" stroke="#bdbdbd" stroke-width="1.2"/><path d="M6 4.5V9.5M3.5 7H8.5" stroke="#bdbdbd" stroke-width="1.6"/><path d="M9.5 10.5 L13 14" stroke="#c8c8c8" stroke-width="2.2"/></svg>
<svg class="a" style="left:571px;top:86px" width="17" height="16" viewBox="0 0 17 16"><path d="M4.5 0.5 H12 L15.5 4 V15.5 H4.5Z" fill="#f6f6f6" stroke="#c4c4c4"/><circle cx="6" cy="7" r="5" fill="#efefef" stroke="#bdbdbd" stroke-width="1.2"/><path d="M3.5 7H8.5" stroke="#bdbdbd" stroke-width="1.6"/><path d="M9.5 10.5 L13 14" stroke="#c8c8c8" stroke-width="2.2"/></svg>
<svg class="a" style="left:593px;top:86px" width="17" height="16" viewBox="0 0 17 16"><path d="M4.5 0.5 H12 L15.5 4 V15.5 H4.5Z" fill="#f6f6f6" stroke="#c4c4c4"/><path d="M3 9 L1.5 7 Q1 5.5 2.5 6 L5 8.5 V3 Q5 1.5 6 2 L6.5 6 V1.5 Q7.5 0.5 8.5 1.5 V6 V2 Q9.5 1 10.5 2.5 V6.5 V3.5 Q11.5 2.5 12.5 4 V10 Q12 14 9 15 H6.5 Q4.5 14 3 9Z" fill="#f0f0f0" stroke="#bdbdbd" stroke-width="0.9"/></svg>
<svg class="a" style="left:615px;top:86px" width="17" height="16" viewBox="0 0 17 16"><path d="M1.5 0.5 H12 L15.5 4 V15.5 H1.5Z" fill="#f6f6f6" stroke="#c4c4c4"/><path d="M8.5 1 L11.5 4 H5.5Z M8.5 15 L11.5 12 H5.5Z M1.5 8 L4.5 5 V11Z M15.5 8 L12.5 5 V11Z" fill="#c4c4c4"/><rect x="5.5" y="5.5" width="6" height="5" fill="#e6e6e6" stroke="#c4c4c4"/></svg>
<svg class="a" style="left:637px;top:86px" width="17" height="16" viewBox="0 0 17 16"><path d="M1.5 0.5 H12 L15.5 4 V15.5 H1.5Z" fill="#f6f6f6" stroke="#c4c4c4"/><text x="3" y="12.5" font-family="Liberation Sans" font-size="8" font-weight="bold" fill="#bdbdbd">1:1</text></svg>
<div class="a sep" style="left:658px;top:86px"></div>
<svg class="a" style="left:666px;top:86px" width="16" height="16" viewBox="0 0 16 16"><path d="M0.5 0.5 H11 L15.5 5 V15.5 H0.5Z" fill="#f6f6f6" stroke="#c4c4c4"/><g fill="#bdbdbd"><path d="M2 2 L6 6 V3.5 H7 V7 H3.5 V6 H6 L2 2Z"/><path d="M14 2 L10 6 V3.5 H9 V7 H12.5 V6 H10Z"/><path d="M2 14 L6 10 V12.5 H7 V9 H3.5 V10 H6Z"/><path d="M14 14 L10 10 V12.5 H9 V9 H12.5 V10 H10Z"/></g></svg>
<svg class="a" style="left:688px;top:86px" width="16" height="16" viewBox="0 0 16 16"><path d="M0.5 0.5 H11 L15.5 5 V15.5 H0.5Z" fill="#f6f6f6" stroke="#c4c4c4"/><g fill="#bdbdbd"><path d="M2 2 H6 V3 H3.5 L7 6.5 L6.5 7 L3 3.5 V6 H2Z"/><path d="M14 14 H10 V13 H12.5 L9 9.5 L9.5 9 L13 12.5 V10 H14Z"/><path d="M2 14 V10 H3 V12.5 L6.5 9 L7 9.5 L3.5 13 H6 V14Z"/><path d="M14 2 V6 H13 V3.5 L9.5 7 L9 6.5 L12.5 3 H10 V2Z"/></g></svg>
<div class="a sep" style="left:708px;top:86px"></div>
<svg class="a" style="left:716px;top:86px" width="16" height="16" viewBox="0 0 16 16"><path d="M2.5 0.5 H11 L15.5 5 V15.5 H2.5Z" fill="#f6f6f6" stroke="#c4c4c4"/><path d="M0.5 8 L6 3 V6 H12 V10 H6 V13Z" fill="#d4d4d4" stroke="#bdbdbd"/></svg>
<svg class="a" style="left:738px;top:86px" width="16" height="16" viewBox="0 0 16 16"><path d="M0.5 0.5 H9 L13.5 5 V15.5 H0.5Z" fill="#f6f6f6" stroke="#c4c4c4"/><path d="M15.5 8 L10 3 V6 H4 V10 H10 V13Z" fill="#d4d4d4" stroke="#bdbdbd"/></svg>
<div class="a" style="left:757px;top:83px;width:59px;height:21px;border:1px solid #a5a5a5;border-radius:2px;background:#fff"></div>
<div class="a" style="left:759px;top:85px;width:36px;height:16px;background:#ececec"></div>
<div class="a" style="left:759px;top:86px;width:27px;height:14px;background:#3399ff"></div>
<div class="a" style="left:759px;top:86px;font-size:12px;line-height:14px;color:#fff;letter-spacing:-0.6px">100%</div>
<svg class="a" style="left:803px;top:92px" width="8" height="4" viewBox="0 0 8 4"><path d="M0 0H8L4 4Z" fill="#9a9a9a"/></svg>
<div class="a sep" style="left:818px;top:86px"></div>
<div class="a hl" style="left:822px;top:83px;width:22px;height:22px"></div>
<svg class="a" style="left:825px;top:86px" width="16" height="16" viewBox="0 0 16 16"><path d="M0.5 0.5 H11 L15.5 5 V15.5 H0.5Z" fill="#f2f2f2" stroke="#bdbdbd"/><rect x="3.5" y="5.5" width="9" height="6" fill="#eaeaea" stroke="#b8b8b8"/><path d="M5 8.5 H11" stroke="#b8b8b8"/></svg>
<svg class="a" style="left:849px;top:86px" width="16" height="16" viewBox="0 0 16 16"><path d="M0.5 0.5 H11 L15.5 5 V15.5 H0.5Z" fill="#f6f6f6" stroke="#c4c4c4"/><rect x="3" y="4" width="10" height="9" fill="none" stroke="#c4c4c4" stroke-dasharray="1.5 1"/><circle cx="8" cy="8.5" r="2.5" fill="#d0d0d0"/></svg>
<svg class="a" style="left:869px;top:85px" width="17" height="17" viewBox="0 0 17 17"><rect x="0.5" y="7.5" width="7" height="9" fill="#fff" stroke="#333"/><rect x="9.5" y="7.5" width="7" height="9" fill="#fff" stroke="#333"/><rect x="2" y="11" width="4" height="3" fill="#2a60c0"/><rect x="11" y="11" width="4" height="3" fill="#2a60c0"/><path d="M3 7 Q6 1 12 3" stroke="#1a5aa8" stroke-width="2.2" fill="none"/><path d="M11 0 L15 3 L11 6Z" fill="#1a5aa8"/></svg>
<svg class="a" style="left:891px;top:85px" width="17" height="17" viewBox="0 0 17 17"><rect x="0.5" y="0.5" width="10" height="9" fill="#fff" stroke="#333"/><rect x="3.5" y="3.5" width="10" height="9" fill="#fff" stroke="#333"/><rect x="6.5" y="6.5" width="10" height="8" fill="#fff" stroke="#333"/><rect x="8" y="8" width="7" height="5" fill="#7ab040"/><path d="M0 15.5 H12" stroke="#1a5ab8" stroke-width="2"/></svg>
<!-- editor toolbar -->
<div class="a" style="left:409px;top:113px;font-size:12px;line-height:14px">Editor</div>
<svg class="a" style="left:444px;top:118px" width="5" height="3" viewBox="0 0 5 3"><path d="M0 0H5L2.5 3Z" fill="#000"/></svg>
<div class="a sep" style="left:453px;top:112px"></div>
<svg class="a" style="left:465px;top:114px" width="9" height="12" viewBox="0 0 9 12"><path d="M0.5 0.5 V11 L8 6Z" fill="#cfcfcf"/></svg>
<svg class="a" style="left:483px;top:112px" width="15" height="16" viewBox="0 0 15 16"><path d="M0.5 0.5 V9 L7 5Z" fill="#cfcfcf"/><text x="7" y="15.5" font-family="Liberation Sans" font-weight="bold" font-size="9" fill="#cfcfcf">A</text></svg>
<div class="a sep" style="left:503px;top:112px"></div>
<svg class="a" style="left:511px;top:112px" width="15" height="15" viewBox="0 0 15 15"><path d="M2 13 L13 2" stroke="#c8c8c8" stroke-width="1.2"/><rect x="0.5" y="11.5" width="3" height="3" fill="#c4c4c4"/><rect x="11.5" y="0.5" width="3" height="3" fill="#c4c4c4"/></svg>
<svg class="a" style="left:533px;top:112px" width="15" height="15" viewBox="0 0 15 15"><path d="M2 13 Q3 4 13 2" stroke="#c8c8c8" stroke-width="1.2" fill="none"/><rect x="0.5" y="11.5" width="3" height="3" fill="#c4c4c4"/><rect x="11.5" y="0.5" width="3" height="3" fill="#c4c4c4"/><rect x="4" y="5" width="3" height="3" fill="#c4c4c4"/></svg>
<svg class="a" style="left:555px;top:112px" width="16" height="16" viewBox="0 0 16 16"><path d="M4 1.5 H13.5 V12.5 H1.5Z" fill="none" stroke="#c4c4c4"/><g fill="#c4c4c4"><rect x="2.5" y="0" width="3" height="3"/><rect x="12" y="0" width="3" height="3"/><rect x="12" y="11" width="3" height="3"/><rect x="0" y="11" width="3" height="3"/></g><path d="M6 10V16M3 13H9" stroke="#c4c4c4"/></svg>
<svg class="a" style="left:576px;top:119px" width="5" height="3" viewBox="0 0 5 3"><path d="M0 0H5L2.5 3Z" fill="#bdbdbd"/></svg>
<svg class="a" style="left:588px;top:112px" width="15" height="15" viewBox="0 0 15 15"><g stroke="#c8c8c8" stroke-width="1.2"><path d="M7.5 0V5M7.5 10V15M0 7.5H5M10 7.5H15M2 2L5 5M13 2L10 5M2 13L5 10M13 13L10 10"/></g><rect x="5.5" y="5.5" width="4" height="4" fill="#bdbdbd"/></svg>
<div class="a sep" style="left:608px;top:112px"></div>
<svg class="a" style="left:615px;top:112px" width="16" height="16" viewBox="0 0 16 16"><path d="M2 2 L14 14 H2Z" fill="none" stroke="#bdbdbd" stroke-width="1.2"/><path d="M2 2H14V14" fill="none" stroke="#c8c8c8" stroke-dasharray="1.5 1.5"/><g fill="#b8b8b8"><rect x="0" y="0" width="3.5" height="3.5"/><rect x="12.5" y="12.5" width="3.5" height="3.5"/><rect x="0" y="12.5" width="3.5" height="3.5"/></g></svg>
<svg class="a" style="left:637px;top:112px" width="16" height="16" viewBox="0 0 16 16"><path d="M2 1 V15 M2 2 L7 8 V15" fill="none" stroke="#bdbdbd" stroke-width="1.2"/><path d="M7 8H14M7 14H14" stroke="#c8c8c8" stroke-dasharray="1.5 1.5"/><g fill="#b8b8b8"><rect x="0.5" y="0" width="3" height="3"/><rect x="12.5" y="7" width="3" height="3"/><rect x="12.5" y="12.5" width="3" height="3"/></g></svg>
<svg class="a" style="left:660px;top:112px" width="16" height="16" viewBox="0 0 16 16"><rect x="0.5" y="4.5" width="15" height="7" fill="#e8e8e8" stroke="#c0c0c0"/><path d="M8 0V16" stroke="#b8b8b8" stroke-width="1.3"/><rect x="6.5" y="0" width="3" height="3" fill="#b8b8b8"/><rect x="6.5" y="13" width="3" height="3" fill="#b8b8b8"/></svg>
<svg class="a" style="left:683px;top:112px" width="14" height="14" viewBox="0 0 14 14"><path d="M1 13L13 1M3 3L11 11" stroke="#c8c8c8" stroke-width="1.1"/><rect x="5.5" y="5.5" width="3" height="3" fill="#b8b8b8"/></svg>
<svg class="a" style="left:705px;top:112px" width="14" height="15" viewBox="0 0 14 15"><path d="M3 10 A5 5 0 1 1 9 12" fill="none" stroke="#c8c8c8" stroke-width="2"/><path d="M7 9 L11 12 L7 14.5Z" fill="#c4c4c4"/><circle cx="7" cy="7" r="1.5" fill="#bdbdbd"/></svg>
<div class="a sep" style="left:724px;top:112px"></div>
<svg class="a" style="left:731px;top:112px" width="16" height="16" viewBox="0 0 16 16"><rect x="0.5" y="0.5" width="15" height="15" rx="1.5" fill="#f2f2f2" stroke="#c0c0c0"/><path d="M3 4H13M3 6.5H13M3 9H13M3 11.5H13" stroke="#cacaca"/></svg>
<svg class="a" style="left:753px;top:112px" width="16" height="16" viewBox="0 0 16 16"><rect x="0.5" y="0.5" width="15" height="15" rx="1.5" fill="#f2f2f2" stroke="#c0c0c0"/><path d="M3 12 L8 4 L13 12" fill="none" stroke="#bdbdbd" stroke-width="1.2"/><g fill="#b8b8b8"><rect x="6.5" y="2.5" width="3" height="3"/><rect x="1.5" y="10.5" width="3" height="3"/><rect x="11.5" y="10.5" width="3" height="3"/></g></svg>
<div class="a sep" style="left:774px;top:112px"></div>
<svg class="a" style="left:781px;top:112px" width="17" height="16" viewBox="0 0 17 16"><rect x="0.5" y="1.5" width="12" height="14" fill="#f2f2f2" stroke="#c0c0c0"/><g fill="none" stroke="#bdbdbd"><rect x="2.5" y="3.5" width="2.5" height="2.5"/><rect x="2.5" y="7.5" width="2.5" height="2.5"/><rect x="2.5" y="11.5" width="2.5" height="2.5"/></g><path d="M6 5H10M6 9H10M6 13H10" stroke="#c8c8c8"/><path d="M9 10 L15 2 L16.5 3.5 L10.5 11.5Z" fill="#e0e0e0" stroke="#b8b8b8" stroke-width="0.7"/></svg>
<!-- TOC toolbar icons -->
<svg class="a" style="left:14px;top:157px" width="18" height="18" viewBox="0 0 18 18"><circle cx="3.5" cy="3" r="2.5" fill="#f5d58a" stroke="#c0903a" stroke-width="0.8"/><path d="M3.5 5.5 V14 H6" stroke="#7aa0d0" fill="none"/><path d="M8 5 L11 8 L8 11 L5 8Z" fill="#f5d58a" stroke="#c0903a" stroke-width="0.8"/><path d="M8 11 L11 14 L8 17 L5 14Z" fill="#f5d58a" stroke="#c0903a" stroke-width="0.8"/><path d="M13 8H16M13 14H16" stroke="#1a4a90" stroke-width="1.4"/></svg>
<div class="a hl" style="left:34px;top:155px;width:22px;height:22px"></div>
<svg class="a" style="left:37px;top:157px" width="16" height="18" viewBox="0 0 16 18"><path d="M2 11 H14 L8 17Z" fill="#f0c050" stroke="#b08020" stroke-width="0.8"/><path d="M3.5 3 V11 Q8 13.5 12.5 11 V3" fill="#c8d4e0" stroke="#5a6a7a" stroke-width="0.9"/><ellipse cx="8" cy="3" rx="4.5" ry="1.8" fill="#eef3f8" stroke="#5a6a7a" stroke-width="0.9"/><path d="M5 4.5 V10.5" stroke="#fff" stroke-width="1.3"/></svg>
<svg class="a" style="left:58px;top:157px" width="18" height="17" viewBox="0 0 18 17"><path d="M9 6 L17 10.5 L9 15 L1 10.5Z" fill="#dcdcdc" stroke="#8a8a8a" stroke-width="0.8"/><path d="M9 1 L17 6 L9 11 L1 6Z" fill="#f5c860" stroke="#b08020" stroke-width="0.8"/></svg>
<svg class="a" style="left:80px;top:156px" width="18" height="18" viewBox="0 0 18 18"><path d="M9 8 L17 12 L9 17 L1 12Z" fill="#f5c860" stroke="#b08020" stroke-width="0.8"/><rect x="4.5" y="0.5" width="9" height="10" fill="#fff" stroke="#222"/><path d="M5 1 H9 L10 5 L8 10 H5Z" fill="#20c8f0"/></svg>
<div class="a sep" style="left:102px;top:158px"></div>
<svg class="a" style="left:109px;top:158px" width="14" height="16" viewBox="0 0 14 16"><rect x="0.5" y="0.5" width="13" height="15" fill="#fff" stroke="#3a4a6a"/><circle cx="3.5" cy="4" r="1.3" fill="#222"/><circle cx="3.5" cy="11" r="1.3" fill="#222"/><path d="M6 3H12M6 6H12M6 10H12M6 13H12" stroke="#4a5a7a"/></svg>
<!-- map bottom toolbar -->
<div class="a" style="left:371px;top:736px;width:16px;height:15px;border:1px solid #8a8a8a;border-radius:3px;background:#e4e4e4"></div>
<svg class="a" style="left:375px;top:739px" width="8" height="8" viewBox="0 0 10 10"><rect x="0.5" y="0.5" width="9" height="9" fill="#9acd5a" stroke="#333"/><path d="M2 8 L8 2" stroke="#3a8ad0" stroke-width="1.5"/></svg>
<svg class="a" style="left:391px;top:737px" width="10" height="12" viewBox="0 0 10 12"><path d="M0.5 0.5 H7 L9.5 3 V11.5 H0.5Z" fill="#fff" stroke="#222"/><rect x="2" y="5" width="5" height="2" fill="#3a8ad0"/><path d="M2 8.5H7" stroke="#333"/></svg>
<div class="a" style="left:406px;top:736px;width:1px;height:14px;background:#9a9a9a"></div>
<svg class="a" style="left:415px;top:737px" width="10" height="11" viewBox="0 0 10 11"><path d="M1.5 5 A3.8 3.8 0 0 1 8 2.5 M8.5 6 A3.8 3.8 0 0 1 2 8.5" fill="none" stroke="#1a5ab0" stroke-width="1.4"/><path d="M6 1 L9.5 1 L9 4.5Z M4 10 L0.5 10 L1 6.5Z" fill="#1a5ab0"/></svg>
<svg class="a" style="left:433px;top:738px" width="8" height="8" viewBox="0 0 8 8"><rect x="0.5" y="0" width="2.5" height="8" fill="#1a50b8"/><rect x="5" y="0" width="2.5" height="8" fill="#1a50b8"/></svg>
<svg class="a" style="left:1126px;top:140px" width="16" height="16" viewBox="0 0 16 16"><rect x="0.5" y="0.5" width="15" height="12" fill="#fff" stroke="#333"/><rect x="1" y="1" width="14" height="2" fill="#2a5fc0"/><path d="M7 4 L13 4 L14 5 V14 H8 V5Z" fill="#e6c820" stroke="#7a6a10" stroke-width="0.7"/><path d="M1.5 11 L8 9 L9 13 L2.5 15.5Z" fill="#e6c820" stroke="#7a6a10" stroke-width="0.7"/><path d="M3.5 11.5 L7 10.5" stroke="#3a9ad0" stroke-width="1.2"/></svg>
<svg class="a" style="left:1126px;top:211px" width="16" height="16" viewBox="0 0 16 16"><rect x="0.5" y="0.5" width="15" height="12" fill="#fff" stroke="#333"/><rect x="1" y="1" width="14" height="2" fill="#2a5fc0"/><rect x="3" y="4.5" width="2" height="7" fill="#dde6f0" stroke="#8aa" stroke-width="0.6"/><circle cx="9.5" cy="11.5" r="3.8" fill="#2a8ad0"/><path d="M7.5 9.5 Q9.5 8.5 11 10.5 Q9.5 12.5 11.5 14 Q8.5 13.5 7.5 11.5Z" fill="#40a040"/></svg>
<svg class="a" style="left:370px;top:135px" width="735" height="600" viewBox="370 135 735 600" shape-rendering="crispEdges">
<defs><clipPath id="ol"><polygon points="537.4,140.1 543.8,140.1 543.8,142.2 556.7,142.2 557.9,144.7 579.7,145.3 581.0,147.3 599.0,147.8 600.3,150.4 606.7,150.9 607.9,152.9 616.9,154.2 616.9,156.0 625.9,156.8 627.2,159.4 640.0,160.6 640.0,163.2 647.7,165.8 657.9,168.3 677.2,170.9 696.4,173.5 710.5,175.5 733.6,175.5 734.9,177.3 747.7,177.3 750.3,179.9 757.9,182.4 765.6,186.3 770.8,191.4 778.5,195.3 784.9,197.8 791.3,201.7 797.7,204.2 804.1,209.4 810.5,214.5 816.9,219.6 823.3,222.2 829.7,226.0 840.0,227.3 845.0,226.0 854.0,224.7 854.0,222.2 879.6,221.7 880.9,224.7 892.4,224.7 893.7,226.8 916.8,226.0 918.1,223.5 925.8,219.6 929.6,214.5 933.5,209.4 938.6,204.2 942.4,200.4 952.7,195.3 970.6,195.3 971.9,197.8 987.3,197.8 991.2,202.9 996.3,206.8 1001.4,211.9 1006.5,215.8 1011.7,220.9 1016.8,226.0 1024.5,232.4 1028.3,236.3 1029.6,245.3 1034.7,247.8 1038.6,251.7 1039.9,258.1 1039.9,278.6 1041.2,288.8 1038.6,301.7 1039.9,311.9 1034.7,319.6 1029.6,329.9 1029.6,335.0 1029.6,335.0 1030.9,340.1 1037.3,342.7 1039.9,350.4 1041.2,361.9 1037.3,365.8 1036.0,370.9 1034.7,396.5 1032.2,399.1 1033.5,424.7 1027.1,432.4 1021.9,437.6 1014.2,442.7 1006.5,447.8 993.7,450.4 986.0,452.9 980.9,460.6 973.2,468.3 968.1,474.7 962.9,478.6 960.4,483.7 964.2,488.8 966.8,504.2 962.9,511.9 961.7,535.0 961.5,544.9 959.0,546.8 959.0,552.6 956.4,553.8 956.4,560.3 952.6,561.5 952.6,566.7 949.4,567.3 949.4,570.5 946.2,571.8 946.2,577.6 941.0,580.8 941.0,591.0 937.2,592.3 934.6,596.2 932.1,600.0 929.2,602.9 921.5,609.4 913.8,617.1 906.2,624.7 898.5,632.4 890.8,640.1 885.6,647.8 877.9,655.5 867.7,663.2 860.0,670.9 852.3,678.6 844.6,683.7 836.9,688.8 829.2,694.0 821.5,699.1 820.0,700.4 814.2,703.9 807.2,707.4 795.4,708.8 791.2,712.2 787.8,715.7 785.0,719.2 779.4,722.6 775.3,726.8 771.1,729.6 748.9,730.3 747.5,733.3 701.7,733.3 700.3,731.7 696.8,728.2 693.3,725.4 689.9,722.6 686.4,719.9 683.6,716.4 680.1,712.9 676.7,709.4 673.2,706.7 669.7,703.2 666.2,699.7 665.6,693.5 660.0,691.4 657.4,686.3 648.5,678.6 642.1,673.5 639.5,668.3 638.2,660.6 631.8,658.1 624.1,652.9 621.5,651.7 608.7,652.9 602.3,647.8 601.0,640.1 595.9,635.0 590.8,629.9 584.4,624.7 583.1,611.9 579.2,596.5 575.4,582.4 574.1,560.6 575.4,535.0 577.2,535.0 578.5,514.5 579.7,501.7 582.3,491.4 579.7,483.7 574.6,473.5 572.1,464.5 566.9,463.2 564.4,450.4 560.5,442.7 554.1,437.6 551.5,429.9 546.4,422.2 549.0,414.5 552.8,408.1 557.9,404.2 557.9,386.3 554.1,381.2 546.4,373.5 538.7,365.8 531.0,358.1 525.9,350.4 520.8,345.3 516.9,335.0 514.4,335.0 511.8,329.9 509.2,322.2 505.4,314.5 506.7,299.1 510.5,295.3 510.5,286.3 507.9,283.7 501.5,276.0 500.3,269.6 491.3,268.3 481.0,264.5 479.7,260.6 473.3,255.5 470.8,247.8 466.9,242.7 464.4,238.8 460.5,232.4 456.7,227.3 452.8,217.1 449.0,210.6 449.0,202.9 452.8,196.5 457.9,195.3 463.1,190.1 466.9,186.3 475.9,182.4 483.6,178.6 500.3,177.3 504.1,176.0 507.9,172.2 511.8,167.1 516.9,163.2 520.8,158.1 524.6,152.9 528.5,149.1 532.3,145.3 537.4,140.1"/></clipPath>
<clipPath id="ct00"><rect x="440.0" y="135.0" width="208.0" height="208.0"/></clipPath>
<clipPath id="ct01"><rect x="640.0" y="135.0" width="208.0" height="208.0"/></clipPath>
<clipPath id="ct02"><rect x="845.0" y="135.0" width="208.0" height="208.0"/></clipPath>
<clipPath id="ct10"><rect x="490.0" y="335.0" width="208.0" height="208.0"/></clipPath>
<clipPath id="ct11"><rect x="690.0" y="335.0" width="208.0" height="208.0"/></clipPath>
<clipPath id="ct12"><rect x="845.0" y="335.0" width="208.0" height="208.0"/></clipPath>
<clipPath id="ct20"><rect x="560.0" y="535.0" width="208.0" height="208.0"/></clipPath>
<clipPath id="ct21"><rect x="760.0" y="535.0" width="208.0" height="208.0"/></clipPath>
<clipPath id="ct22"><rect x="900.0" y="500.0" width="108.0" height="108.0"/></clipPath>
<clipPath id="ct02b"><rect x="840.0" y="300.0" width="200.0" height="80.0"/></clipPath>
<clipPath id="ct11c"><rect x="660.0" y="380.0" width="140.0" height="180.0"/></clipPath>
<clipPath id="ct11b"><rect x="800.0" y="380.0" width="140.0" height="180.0"/></clipPath>
<clipPath id="ct20b"><rect x="680.0" y="540.0" width="160.0" height="160.0"/></clipPath>
</defs><g clip-path="url(#ol)">
<polygon points="537.4,140.1 543.8,140.1 543.8,142.2 556.7,142.2 557.9,144.7 579.7,145.3 581.0,147.3 599.0,147.8 600.3,150.4 606.7,150.9 607.9,152.9 616.9,154.2 616.9,156.0 625.9,156.8 627.2,159.4 640.0,160.6 640.0,163.2 647.7,165.8 657.9,168.3 677.2,170.9 696.4,173.5 710.5,175.5 733.6,175.5 734.9,177.3 747.7,177.3 750.3,179.9 757.9,182.4 765.6,186.3 770.8,191.4 778.5,195.3 784.9,197.8 791.3,201.7 797.7,204.2 804.1,209.4 810.5,214.5 816.9,219.6 823.3,222.2 829.7,226.0 840.0,227.3 845.0,226.0 854.0,224.7 854.0,222.2 879.6,221.7 880.9,224.7 892.4,224.7 893.7,226.8 916.8,226.0 918.1,223.5 925.8,219.6 929.6,214.5 933.5,209.4 938.6,204.2 942.4,200.4 952.7,195.3 970.6,195.3 971.9,197.8 987.3,197.8 991.2,202.9 996.3,206.8 1001.4,211.9 1006.5,215.8 1011.7,220.9 1016.8,226.0 1024.5,232.4 1028.3,236.3 1029.6,245.3 1034.7,247.8 1038.6,251.7 1039.9,258.1 1039.9,278.6 1041.2,288.8 1038.6,301.7 1039.9,311.9 1034.7,319.6 1029.6,329.9 1029.6,335.0 1029.6,335.0 1030.9,340.1 1037.3,342.7 1039.9,350.4 1041.2,361.9 1037.3,365.8 1036.0,370.9 1034.7,396.5 1032.2,399.1 1033.5,424.7 1027.1,432.4 1021.9,437.6 1014.2,442.7 1006.5,447.8 993.7,450.4 986.0,452.9 980.9,460.6 973.2,468.3 968.1,474.7 962.9,478.6 960.4,483.7 964.2,488.8 966.8,504.2 962.9,511.9 961.7,535.0 961.5,544.9 959.0,546.8 959.0,552.6 956.4,553.8 956.4,560.3 952.6,561.5 952.6,566.7 949.4,567.3 949.4,570.5 946.2,571.8 946.2,577.6 941.0,580.8 941.0,591.0 937.2,592.3 934.6,596.2 932.1,600.0 929.2,602.9 921.5,609.4 913.8,617.1 906.2,624.7 898.5,632.4 890.8,640.1 885.6,647.8 877.9,655.5 867.7,663.2 860.0,670.9 852.3,678.6 844.6,683.7 836.9,688.8 829.2,694.0 821.5,699.1 820.0,700.4 814.2,703.9 807.2,707.4 795.4,708.8 791.2,712.2 787.8,715.7 785.0,719.2 779.4,722.6 775.3,726.8 771.1,729.6 748.9,730.3 747.5,733.3 701.7,733.3 700.3,731.7 696.8,728.2 693.3,725.4 689.9,722.6 686.4,719.9 683.6,716.4 680.1,712.9 676.7,709.4 673.2,706.7 669.7,703.2 666.2,699.7 665.6,693.5 660.0,691.4 657.4,686.3 648.5,678.6 642.1,673.5 639.5,668.3 638.2,660.6 631.8,658.1 624.1,652.9 621.5,651.7 608.7,652.9 602.3,647.8 601.0,640.1 595.9,635.0 590.8,629.9 584.4,624.7 583.1,611.9 579.2,596.5 575.4,582.4 574.1,560.6 575.4,535.0 577.2,535.0 578.5,514.5 579.7,501.7 582.3,491.4 579.7,483.7 574.6,473.5 572.1,464.5 566.9,463.2 564.4,450.4 560.5,442.7 554.1,437.6 551.5,429.9 546.4,422.2 549.0,414.5 552.8,408.1 557.9,404.2 557.9,386.3 554.1,381.2 546.4,373.5 538.7,365.8 531.0,358.1 525.9,350.4 520.8,345.3 516.9,335.0 514.4,335.0 511.8,329.9 509.2,322.2 505.4,314.5 506.7,299.1 510.5,295.3 510.5,286.3 507.9,283.7 501.5,276.0 500.3,269.6 491.3,268.3 481.0,264.5 479.7,260.6 473.3,255.5 470.8,247.8 466.9,242.7 464.4,238.8 460.5,232.4 456.7,227.3 452.8,217.1 449.0,210.6 449.0,202.9 452.8,196.5 457.9,195.3 463.1,190.1 466.9,186.3 475.9,182.4 483.6,178.6 500.3,177.3 504.1,176.0 507.9,172.2 511.8,167.1 516.9,163.2 520.8,158.1 524.6,152.9 528.5,149.1 532.3,145.3 537.4,140.1" fill="#b3ebee"/>
<g clip-path="url(#ct00)">
<polygon points="419.5,196.5 452.8,196.5 459.2,197.8 464.4,202.9 470.8,206.8 473.3,210.6 474.6,205.5 481.0,201.7 500.3,201.2 499.0,208.1 497.7,222.2 495.1,223.5 495.1,224.7 501.5,223.5 507.9,218.3 516.9,209.4 522.1,204.2 532.3,202.9 542.6,200.4 552.8,195.3 557.9,191.9 561.8,194.0 568.2,199.1 573.3,201.2 583.6,205.5 593.8,209.4 604.1,210.6 614.4,209.4 615.6,199.1 619.5,201.7 624.6,208.1 632.3,214.5 660.5,217.1 660.5,360.6 419.5,360.6" fill="#9bd1ed"/>
<polygon points="419.5,238.8 464.4,238.8 469.5,235.5 473.3,233.7 491.3,231.2 499.0,228.6 516.9,227.3 532.3,227.8 550.3,229.4 563.1,230.4 573.3,231.9 581.0,228.6 588.7,223.5 596.4,223.5 604.1,228.6 614.4,231.2 624.6,235.5 634.9,240.6 660.5,242.7 660.5,360.6 419.5,360.6" fill="#7fb8ea"/>
<polygon points="419.5,242.7 466.9,242.7 470.8,247.8 474.6,252.9 481.0,255.5 491.3,255.5 500.3,258.1 501.5,254.2 515.6,251.7 516.9,249.1 524.6,251.7 529.7,255.5 532.3,258.1 534.9,252.9 542.6,247.8 547.7,249.1 552.8,255.5 560.5,263.2 568.2,269.6 573.3,277.3 593.8,278.6 604.1,279.9 619.5,282.4 660.5,282.4 660.5,360.6 419.5,360.6" fill="#5ea1e3"/>
<polygon points="419.5,295.3 505.4,295.3 515.6,295.3 518.2,304.2 520.8,311.9 528.5,310.6 542.6,311.9 547.7,311.9 552.8,315.8 563.1,309.4 578.5,301.7 593.8,294.0 604.1,283.7 619.5,284.2 634.9,288.8 660.5,290.1 660.5,360.6 419.5,360.6" fill="#3c8be0"/>
<polygon points="619.5,355.5 629.7,319.6 660.5,309.4 660.5,360.6 619.5,360.6" fill="#2176d8"/>
</g>
<g clip-path="url(#ct01)">
<polygon points="619.5,220.9 643.8,227.3 647.7,229.9 679.7,229.9 681.0,235.0 686.2,233.7 695.1,231.2 695.1,188.8 700.3,190.1 731.0,188.8 737.4,185.0 747.7,181.2 750.3,176.0 865.6,111.9 865.6,360.6 619.5,360.6" fill="#9bd1ed"/>
<polygon points="619.5,247.8 652.8,246.5 665.6,245.3 673.3,244.0 673.3,263.2 665.6,270.9 657.9,274.7 678.5,264.5 691.3,261.9 709.2,252.9 722.1,251.7 737.4,251.7 747.7,254.2 755.4,255.5 760.5,250.4 763.1,252.9 770.8,260.6 779.7,268.3 783.6,263.2 793.8,265.8 799.0,263.2 797.7,250.4 787.4,245.3 782.3,237.6 787.4,229.9 793.8,219.6 793.8,205.5 796.4,201.7 865.6,111.9 865.6,360.6 619.5,360.6" fill="#7fb8ea"/>
<polygon points="619.5,285.0 650.3,283.7 659.2,281.2 665.6,277.3 675.9,270.9 681.0,267.1 691.3,268.3 704.1,268.3 714.4,270.9 729.7,273.5 745.1,277.3 752.8,286.3 757.9,286.3 760.5,267.1 765.6,268.3 773.3,277.3 783.6,283.7 793.8,288.8 804.1,294.0 809.2,299.1 814.4,304.2 824.6,304.2 860.5,304.2 860.5,360.6 619.5,360.6" fill="#5ea1e3"/>
<polygon points="619.5,299.1 645.1,295.3 650.3,288.8 657.9,281.2 664.4,279.9 673.3,274.7 677.2,273.5 688.7,283.7 696.4,288.8 701.5,283.7 719.5,279.9 742.6,282.4 752.8,290.1 760.5,299.1 768.2,304.2 778.5,309.4 793.8,311.9 804.1,306.8 819.5,305.5 860.5,305.5 860.5,360.6 619.5,360.6" fill="#3c8be0"/>
<polygon points="619.5,295.3 646.4,301.7 651.5,314.5 652.8,355.5 619.5,355.5" fill="#2176d8"/>
<polygon points="716.9,355.5 716.9,317.1 734.9,314.5 742.6,304.2 752.8,292.7 760.5,296.5 768.2,306.8 775.9,322.2 778.5,355.5" fill="#2176d8"/>
<polygon points="681.0,236.3 693.8,240.1 699.0,229.9 706.7,226.0 719.5,222.2 747.7,219.6 763.1,222.2 773.3,229.9 775.9,241.4 768.2,245.3 747.7,238.8 722.1,237.6 709.2,240.1 693.8,241.4 684.9,237.6" fill="#b3ebee"/>
<polygon points="665.6,278.6 675.9,274.7 675.9,355.5 670.8,355.5" fill="#5ea1e3"/>
</g>
<g clip-path="url(#ct02)">
<polygon points="824.5,211.9 916.8,211.9 918.1,223.5 925.8,219.6 933.5,209.4 942.4,200.4 952.7,211.9 961.7,220.9 961.7,237.6 950.1,244.0 955.3,250.4 962.9,258.1 973.2,265.8 975.8,278.6 978.3,283.7 988.6,277.3 1009.1,281.2 1014.2,274.7 1027.1,267.1 1039.9,273.5 1070.6,273.5 1070.6,360.6 824.5,360.6" fill="#9bd1ed"/>
<polygon points="824.5,211.9 919.4,211.9 920.6,237.6 928.3,250.4 942.4,255.5 939.9,260.6 927.1,264.5 911.7,265.8 896.3,260.6 883.5,258.1 870.6,261.9 857.8,267.1 824.5,269.6" fill="#7fb8ea"/>
<polygon points="824.5,285.0 875.8,283.7 896.3,283.2 906.5,285.0 912.9,299.1 927.1,295.3 962.9,297.8 983.5,295.3 993.7,288.8 1004.0,288.8 1009.1,286.3 1014.2,288.8 1024.5,283.7 1070.6,283.7 1070.6,360.6 824.5,360.6" fill="#7fb8ea"/>
<polygon points="824.5,274.7 865.5,274.7 861.7,281.2 824.5,282.4" fill="#7fb8ea"/>
<polygon points="824.5,305.5 870.6,304.2 880.9,299.1 905.3,296.0 896.3,314.5 888.6,327.3 886.0,355.5 824.5,355.5" fill="#5ea1e3"/>
<polygon points="910.4,355.5 921.9,304.2 927.1,305.5 924.5,355.5" fill="#5ea1e3"/>
<polygon points="996.3,314.5 1009.1,304.2 1019.4,309.4 1024.5,319.6 1029.6,355.5 1004.0,355.5" fill="#5ea1e3"/>
<polygon points="980.9,297.8 988.6,296.5 984.7,314.5 983.5,355.5 978.3,355.5" fill="#5ea1e3"/>
<polygon points="824.5,311.9 850.1,311.9 868.1,317.1 865.5,355.5 824.5,355.5" fill="#3c8be0"/>
</g>
<g clip-path="url(#ct10)">
<polygon points="466.9,311.9 718.2,311.9 718.2,563.2 466.9,563.2" fill="#3c8be0"/>
<polygon points="469.5,376.0 547.7,376.0 559.2,373.5 579.7,365.8 579.7,355.5 590.0,349.1 597.7,349.1 607.9,356.8 618.2,350.4 624.6,337.6 625.9,311.9 715.6,311.9 715.6,560.6 469.5,560.6" fill="#2176d8"/>
<polygon points="469.5,431.2 552.8,431.2 564.4,432.4 587.4,427.3 597.7,419.6 610.5,411.9 618.2,409.4 620.8,394.0 633.6,392.7 659.2,391.4 660.5,411.9 659.2,423.5 654.1,432.4 643.8,442.7 638.7,455.5 641.3,460.6 649.0,450.4 664.4,432.4 679.7,429.9 715.6,431.2 715.6,560.6 469.5,560.6" fill="#2158c8"/>
<polygon points="566.9,463.2 574.6,465.8 582.3,481.2 586.2,501.7 595.1,511.9 595.1,526.0 592.6,555.5 577.2,555.5" fill="#1f40b4"/>
<polygon points="678.5,431.2 715.6,427.3 715.6,560.6 674.6,560.6 670.8,514.5 673.3,478.6 677.2,450.4" fill="#1f40b4"/>
<polygon points="643.8,560.6 646.4,519.6 664.4,524.7 674.6,514.5 682.3,506.8 715.6,504.2 715.6,560.6" fill="#18249c"/>
<polygon points="660.0,311.9 715.6,311.9 715.6,390.1 660.0,391.4" fill="#3c8be0"/>
<polygon points="669.5,311.9 675.9,311.9 678.5,365.8 673.3,386.3 669.5,386.3 670.8,365.8" fill="#5ea1e3"/>
</g>
<g clip-path="url(#ct11)">
<polygon points="666.9,311.9 918.2,311.9 918.2,563.2 666.9,563.2" fill="#2176d8"/>
<polygon points="666.9,311.9 715.6,311.9 714.4,381.2 711.8,386.3 666.9,394.0" fill="#3c8be0"/>
<polygon points="800.3,311.9 915.6,311.9 915.6,350.4 869.5,378.6 854.1,391.4 847.7,386.3 849.0,360.6 843.8,345.3 823.3,342.7 818.2,345.3" fill="#3c8be0"/>
<polygon points="713.1,386.3 736.2,382.4 743.8,368.3 746.4,376.0 766.9,383.7 782.3,368.3 797.7,376.0 805.4,360.6 818.2,352.9 823.3,355.5 828.5,401.7 843.8,422.2 854.1,442.7 864.4,460.6 910.5,445.3 915.6,445.3 915.6,560.6 666.9,560.6 666.9,394.0" fill="#2158c8"/>
<polygon points="666.9,394.0 707.9,387.6 720.8,396.5 736.2,409.4 743.8,419.6 751.5,429.9 756.7,419.6 761.8,417.1 772.1,427.3 777.2,422.2 792.6,422.2 813.1,423.5 823.3,437.6 833.6,458.1 838.7,478.6 846.4,483.7 864.4,460.6 879.7,445.3 915.6,450.4 915.6,560.6 666.9,560.6" fill="#1f40b4"/>
<polygon points="757.9,560.6 757.9,509.4 764.4,496.5 766.9,478.6 779.7,469.6 787.4,473.5 792.6,488.8 805.4,488.8 818.2,482.4 820.8,491.4 818.2,499.1 833.6,488.8 854.1,486.3 869.5,499.1 884.9,504.2 915.6,509.4 915.6,560.6" fill="#18249c"/>
<polygon points="860.5,376.0 864.4,350.4 869.5,311.9 884.9,311.9 879.7,355.5 866.9,370.9" fill="#5ea1e3"/>
<polygon points="669.5,432.4 700.3,447.8 705.4,463.2 713.1,478.6 716.9,496.5 710.5,494.0 702.8,473.5 695.1,452.9 669.5,442.7" fill="#2176d8"/>
</g>
<g clip-path="url(#ct12)">
<polygon points="821.9,311.9 1073.2,311.9 1073.2,563.2 821.9,563.2" fill="#3c8be0"/>
<polygon points="821.9,394.0 860.4,388.8 870.6,386.3 883.5,370.9 893.7,386.3 896.3,388.8 911.7,355.5 921.9,355.5 947.6,363.2 973.2,368.3 993.7,381.2 1021.9,378.6 1034.7,396.5 1070.6,396.5 1070.6,560.6 821.9,560.6" fill="#2176d8"/>
<polygon points="906.5,406.8 927.1,406.8 947.6,404.2 957.8,388.8 973.2,404.2 988.6,432.4 1011.7,440.1 1070.6,432.4 1070.6,560.6 960.4,560.6 919.4,509.4 901.4,476.0 898.8,445.3 901.4,422.2" fill="#2158c8"/>
<polygon points="821.9,478.6 870.6,447.8 883.5,445.3 896.3,458.1 909.1,478.6 921.9,509.4 921.9,560.6 821.9,560.6" fill="#2158c8"/>
<polygon points="898.8,419.6 911.7,424.7 927.1,432.4 947.6,437.6 957.8,447.8 968.1,442.7 983.5,452.9 1070.6,452.9 1070.6,560.6 961.7,560.6 921.9,555.5 916.8,509.4 901.4,476.0 897.6,445.3" fill="#1f40b4"/>
<polygon points="821.9,486.3 860.4,463.2 870.6,460.6 891.2,478.6 909.1,494.0 921.9,555.5 821.9,560.6" fill="#1f40b4"/>
<polygon points="821.9,488.8 860.4,486.3 870.6,488.8 886.0,509.4 896.3,524.7 901.4,560.6 821.9,560.6" fill="#18249c"/>
<polygon points="855.3,560.6 855.3,524.7 865.5,526.0 868.1,560.6" fill="#0a0a8a"/>
<polygon points="860.4,311.9 896.3,311.9 893.7,345.3 883.5,360.6 870.6,376.0 860.4,386.3 861.7,365.8" fill="#5ea1e3"/>
<polygon points="998.8,311.9 1024.5,311.9 1021.9,350.4 1021.9,376.0 1009.1,370.9 1004.0,350.4" fill="#5ea1e3"/>
</g>
<g clip-path="url(#ct20)">
<polygon points="536.9,511.9 788.2,511.9 788.2,763.2 536.9,763.2" fill="#18249c"/>
<polygon points="536.9,511.9 631.8,511.9 621.5,545.3 606.2,560.6 595.9,573.5 590.8,578.6 575.4,581.2 536.9,583.7" fill="#1f40b4"/>
<polygon points="711.3,511.9 785.6,511.9 785.6,622.2 754.9,619.6 744.6,591.4 729.2,568.3 719.0,550.4" fill="#1f40b4"/>
<polygon points="583.1,619.6 601.0,631.2 619.0,623.5 636.9,614.5 647.2,619.6 662.6,627.3 672.8,619.6 690.8,619.6 701.0,632.4 708.7,642.7 715.1,658.1 724.1,642.7 736.9,637.6 754.9,627.3 785.6,622.2 785.6,760.6 536.9,760.6 536.9,619.6" fill="#0a0a8a"/>
<polygon points="593.3,511.9 629.2,511.9 619.0,545.3 603.6,563.2 595.9,573.5 593.3,555.5" fill="#2158c8"/>
</g>
<g clip-path="url(#ct21)">
<polygon points="736.9,511.9 988.2,511.9 988.2,763.2 736.9,763.2" fill="#18249c"/>
<polygon points="801.0,511.9 870.3,511.9 872.8,545.3 880.5,558.1 877.9,570.9 879.2,586.3 885.6,601.7 889.5,617.1 888.2,629.9 898.5,632.4 985.6,632.4 985.6,760.6 736.9,760.6 736.9,640.1 770.3,635.0 775.4,629.9 795.9,626.0 806.2,635.0 816.4,642.7 826.7,650.4 836.9,660.6 844.6,652.9 842.1,642.7 836.9,627.3 834.4,611.9 831.8,596.5 826.7,591.4 819.0,578.6 816.4,563.2 808.7,550.4" fill="#0a0a8a"/>
<polygon points="899.7,511.9 985.6,511.9 954.9,550.4 947.2,560.6 934.4,564.5 924.1,552.9 913.8,565.8 906.2,550.4" fill="#1f40b4"/>
</g>
<g clip-path="url(#ct22)">
<polygon points="888.5,488.5 1014.1,488.5 1014.1,614.1 888.5,614.1" fill="#1f40b4"/>
<polygon points="888.5,539.7 902.6,539.7 903.8,550.0 907.1,550.0 907.7,562.8 912.8,567.9 916.7,562.8 923.1,559.0 923.1,549.4 926.9,549.4 929.5,562.8 942.3,564.1 946.2,555.1 952.6,552.6 952.6,541.0 951.9,534.6 955.1,530.8 958.3,524.4 961.5,523.1 1012.8,523.1 1012.8,612.8 888.5,612.8" fill="#18249c"/>
<polygon points="910.9,488.5 921.2,488.5 921.8,509.0 915.4,509.6 911.5,505.1" fill="#2158c8"/>
</g>
<g clip-path="url(#ct02b)">
<polygon points="824.4,284.4 1055.3,284.4 1055.3,395.5 824.4,395.5" fill="#5ea1e3"/>
<polygon points="824.4,284.4 902.5,284.4 899.0,306.9 871.2,310.4 867.8,315.6 857.4,315.6 850.4,310.4 824.4,306.9" fill="#7fb8ea"/>
<polygon points="885.1,334.7 897.3,322.6 921.6,305.2 926.8,305.2 926.8,331.2 909.4,331.2 900.8,336.5" fill="#7fb8ea"/>
<polygon points="926.8,284.4 978.9,284.4 978.9,329.5 968.5,333.0 958.1,330.4 944.2,334.7 933.8,339.9 926.8,331.2" fill="#7fb8ea"/>
<polygon points="982.4,284.4 1010.1,284.4 1003.2,308.7 996.2,315.6 999.7,333.0 1006.7,346.9 992.8,331.2 984.1,324.3" fill="#7fb8ea"/>
<polygon points="1017.1,305.2 1055.3,284.4 1055.3,317.4 1029.2,333.0 1018.8,324.3" fill="#7fb8ea"/>
<polygon points="824.4,306.9 850.4,310.4 857.4,315.6 867.8,317.4 864.3,395.5 846.9,395.5 824.4,362.5" fill="#3c8be0"/>
<polygon points="895.6,339.9 923.3,331.2 933.8,339.9 944.2,334.7 961.5,330.4 982.4,341.7 1004.9,350.3 1006.7,372.9 992.8,395.5 961.5,369.4 944.2,366.0 921.6,357.3 912.9,355.6 909.4,395.5 895.6,395.5" fill="#3c8be0"/>
<polygon points="1022.3,334.7 1055.3,348.6 1055.3,395.5 1024.0,395.5" fill="#3c8be0"/>
<polygon points="824.4,338.2 850.4,343.4 846.9,395.5 824.4,395.5" fill="#2176d8"/>
<polygon points="869.5,395.5 883.4,355.6 895.6,343.4 895.6,395.5" fill="#2176d8"/>
<polygon points="906.0,395.5 912.9,355.6 921.6,357.3 944.2,366.0 961.5,369.4 992.8,395.5" fill="#2176d8"/>
<polygon points="1001.5,367.7 1015.3,395.5 1001.5,395.5" fill="#2176d8"/>
</g>
<g clip-path="url(#ct11c)">
<polygon points="639.2,359.2 865.3,359.2 865.3,585.3 639.2,585.3" fill="#1f40b4"/>
<polygon points="639.2,359.2 711.9,359.2 694.6,393.8 687.7,386.9 673.8,391.5 639.2,391.5" fill="#3c8be0"/>
<polygon points="639.2,391.5 673.8,391.5 687.7,386.9 694.6,393.8 692.3,421.5 687.7,422.7 694.6,437.7 701.5,449.2 713.0,476.9 716.5,497.6 710.7,495.3 701.5,472.3 692.3,446.9 678.5,433.0 639.2,433.0" fill="#2176d8"/>
<polygon points="710.7,359.2 770.7,359.2 763.8,386.9 736.1,383.5 713.0,385.8" fill="#2176d8"/>
<polygon points="711.9,385.8 736.1,383.5 763.8,386.9 821.4,359.2 821.4,421.5 779.9,421.5 775.3,428.4 761.5,416.9 747.6,428.4 736.1,414.6 720.0,398.5" fill="#2158c8"/>
<polygon points="639.2,433.0 678.5,433.0 677.3,467.6 671.5,476.9 670.4,518.4 639.2,529.9" fill="#2158c8"/>
<polygon points="756.9,583.0 759.2,509.2 766.1,479.2 779.9,469.9 791.5,474.6 821.4,488.4 821.4,583.0" fill="#18249c"/>
<polygon points="639.2,529.9 671.5,520.7 680.8,506.8 681.9,583.0 639.2,583.0" fill="#18249c"/>
<polygon points="685.4,583.0 696.9,518.4 713.0,529.9 717.7,583.0" fill="#18249c"/>
</g>
<g clip-path="url(#ct11b)">
<polygon points="779.2,359.2 1005.3,359.2 1005.3,585.3 779.2,585.3" fill="#1f40b4"/>
<polygon points="779.2,359.2 827.7,359.2 832.3,403.1 841.5,419.2 853.0,437.7 864.6,458.4 841.5,483.8 830.0,456.1 813.8,423.8 779.2,421.5" fill="#2158c8"/>
<polygon points="864.6,459.6 878.4,445.7 892.3,456.1 899.2,476.9 917.6,483.8 921.1,509.2 906.1,497.6 892.3,488.4 869.2,472.3" fill="#2158c8"/>
<polygon points="908.4,410.0 917.6,403.1 961.4,403.1 961.4,435.4 919.9,426.1" fill="#2158c8"/>
<polygon points="827.7,359.2 961.4,359.2 961.4,403.1 917.6,403.1 908.4,410.0 899.2,421.5 899.2,449.2 892.3,456.1 878.4,445.7 864.6,458.4 853.0,437.7 841.5,419.2 832.3,403.1" fill="#2176d8"/>
<polygon points="899.2,446.9 903.8,449.2 903.8,476.9 899.2,474.6" fill="#2176d8"/>
<polygon points="847.3,359.2 866.9,359.2 862.3,386.9 849.6,393.8" fill="#3c8be0"/>
<polygon points="892.3,359.2 906.1,359.2 899.2,388.1 893.4,386.9" fill="#3c8be0"/>
<polygon points="779.2,488.4 823.1,497.6 841.5,486.1 860.0,486.1 876.1,497.6 887.6,509.2 899.2,527.6 906.1,583.0 779.2,583.0" fill="#18249c"/>
<polygon points="779.2,527.6 813.8,532.2 830.0,534.5 843.8,541.4 855.4,536.8 855.4,525.3 862.3,525.3 869.2,541.4 876.1,583.0 779.2,583.0" fill="#0a0a8a"/>
</g>
<g clip-path="url(#ct20b)">
<polygon points="661.5,521.5 862.6,521.5 862.6,722.6 661.5,722.6" fill="#18249c"/>
<polygon points="712.8,521.5 737.4,521.5 741.5,572.8 751.8,591.3 757.9,617.9 751.8,622.1 745.6,591.3 731.3,574.9 719.0,556.4" fill="#1f40b4"/>
<polygon points="741.5,521.5 753.8,521.5 762.1,576.9 762.1,585.1 755.9,570.8 745.6,552.3" fill="#1f40b4"/>
<polygon points="682.1,521.5 688.2,521.5 684.1,568.7 661.5,568.7" fill="#1f40b4"/>
<polygon points="801.0,521.5 860.5,521.5 860.5,628.2 831.8,597.4 823.6,581.0 815.4,558.5 803.1,548.2" fill="#0a0a8a"/>
<polygon points="661.5,617.9 688.2,617.9 700.5,634.4 706.7,646.7 714.9,663.1 716.9,652.8 727.2,642.6 747.7,636.4 753.8,622.1 774.4,605.6 780.5,607.7 778.5,622.1 786.7,630.3 794.9,626.2 805.1,636.4 815.4,644.6 823.6,648.7 837.9,661.0 860.5,663.1 860.5,720.5 661.5,720.5" fill="#0a0a8a"/>
<polygon points="757.9,624.1 774.4,622.1 772.3,632.3 757.9,642.6" fill="#18249c"/>
</g>
</g></svg></body></html>
